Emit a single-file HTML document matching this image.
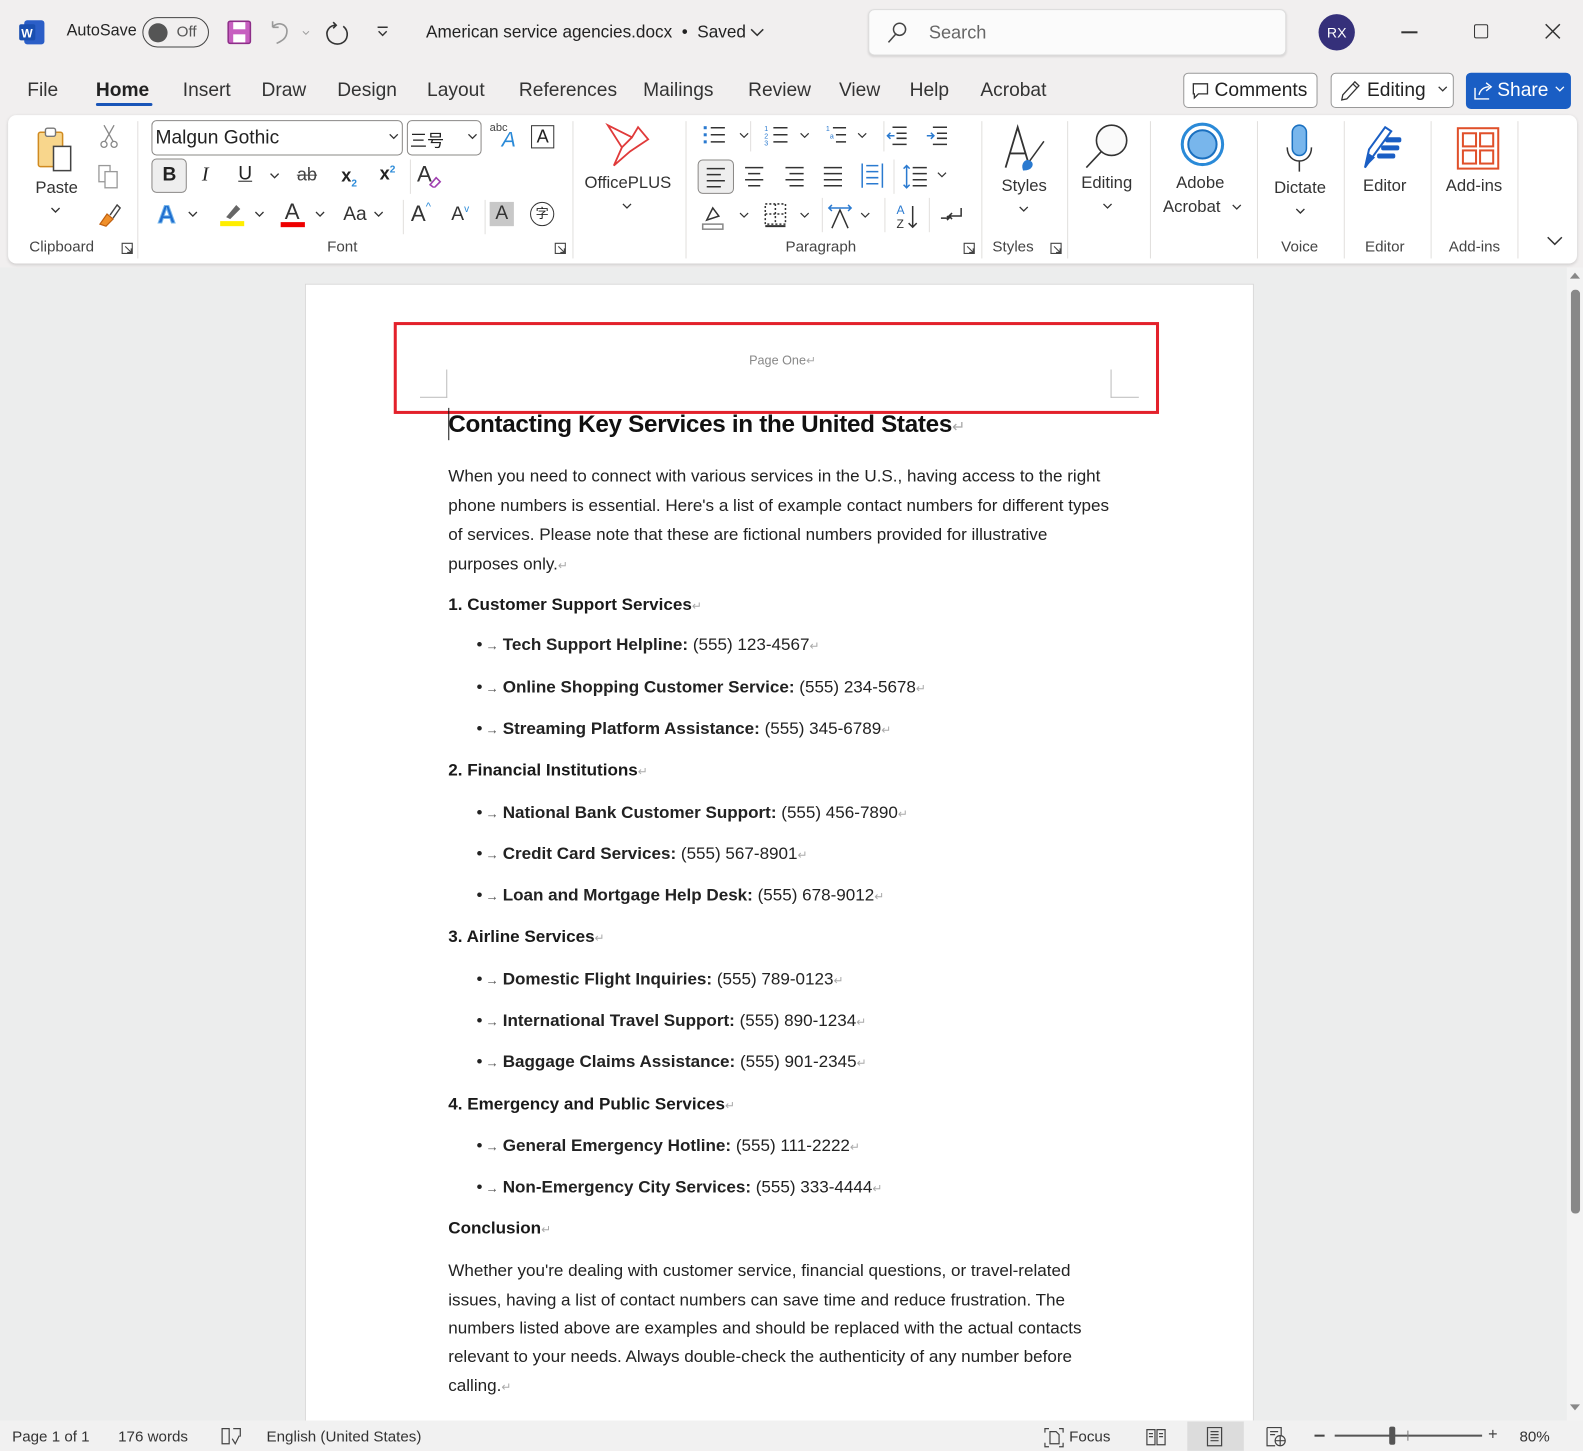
<!DOCTYPE html>
<html><head><meta charset="utf-8">
<style>
*{margin:0;padding:0;box-sizing:border-box}
html,body{width:1583px;height:1450px;overflow:hidden;background:#efeded}
#w{position:absolute;left:0;top:0;width:1568px;height:1437px;transform:scale(1.0096);transform-origin:0 0;font-family:"Liberation Sans","Noto Sans CJK SC",sans-serif;color:#222;background:#f1efef}
.a{position:absolute;white-space:nowrap}
.t{font-size:16px;color:#242424}
.tab{font-size:19px;color:#333;top:79px}
.rb{font-size:16.5px;color:#333;text-align:center}
.gl{font-size:15px;color:#444;top:236px}
.sep{position:absolute;width:1px;background:#e1dfdd}
.doc{font-size:16.9px;color:#222}
.b{font-weight:bold}
.pm{color:#aaa;font-size:12px}
.ar{color:#555;font-size:13px;margin:0 4px 0 3px}
.ic{position:absolute}
</style></head><body>
<div id="w">
<svg class="ic" style="left:18px;top:19px" width="28" height="26"><rect x="6" y="1" width="20" height="24" rx="3" fill="#2b5ec7"/><rect x="1" y="5" width="16" height="16" rx="2" fill="#1a4fb0"/><text x="3" y="18" font-size="12" font-weight="bold" fill="#fff" font-family="Liberation Sans">W</text></svg>
<div class="a t" style="left:66px;top:22px">AutoSave</div>
<div class="a" style="left:141px;top:17px;width:66px;height:30px;border:1.5px solid #444;border-radius:15px"></div>
<div class="a" style="left:147px;top:23px;width:19px;height:19px;border-radius:50%;background:#555"></div>
<div class="a t" style="left:175px;top:23px;color:#555;font-size:15px">Off</div>
<svg class="ic" style="left:224px;top:19px" width="26" height="26"><rect x="2" y="2" width="22" height="22" rx="2" fill="#c75fc0" stroke="#8d2e88" stroke-width="1.5"/><rect x="7" y="3" width="12" height="7" fill="#fff"/><rect x="7" y="15" width="12" height="8" fill="#fff"/></svg>
<svg class="ic" style="left:264px;top:17px" width="50" height="30" fill="none" stroke="#999" stroke-width="1.6"><path d="M6 10 L6 4 M6 10 L12 10 M6 10 C10 4 22 6 20 16 C19 22 14 24 10 26"/><path d="M36 14 l3 3 l3-3" stroke-width="1"/></svg>
<svg class="ic" style="left:320px;top:17px" width="30" height="30" fill="none" stroke="#333" stroke-width="1.6"><path d="M10 5 L13 8 L10 11"/><path d="M13 8 C6 8 3 14 4 18 C5 25 12 28 18 26 C25 23 26 14 20 9"/></svg>
<svg class="ic" style="left:372px;top:25px" width="14" height="14" fill="none" stroke="#333" stroke-width="1.4"><path d="M2 2 H12 M3 6 l4 4 l4-4"/></svg>
<div class="a" style="left:422px;top:22px;font-size:17px;color:#222">American service agencies.docx &nbsp;•&nbsp; Saved</div>
<svg class="ic" style="left:742px;top:26px" width="16" height="12" fill="none" stroke="#333" stroke-width="1.5"><path d="M2 3 l6 6 l6-6"/></svg>
<div class="a" style="left:860px;top:9px;width:414px;height:46px;background:#fbfbfb;border:1px solid #ddd;border-radius:6px;box-shadow:0 1px 2px rgba(0,0,0,.12)"></div>
<svg class="ic" style="left:877px;top:20px" width="24" height="24" fill="none" stroke="#444" stroke-width="1.5"><circle cx="14" cy="9" r="6"/><path d="M10 14 L3 22"/></svg>
<div class="a" style="left:920px;top:22px;font-size:18px;color:#666">Search</div>
<div class="a" style="left:1306px;top:14px;width:36px;height:36px;border-radius:50%;background:#35307a;color:#fff;font-size:14px;text-align:center;line-height:36px">RX</div>
<div class="a" style="left:1388px;top:31px;width:16px;height:1.5px;background:#333"></div>
<div class="a" style="left:1460px;top:24px;width:14px;height:14px;border:1.5px solid #333;border-radius:2px"></div>
<svg class="ic" style="left:1530px;top:23px" width="16" height="16" stroke="#333" stroke-width="1.5"><path d="M1 1 L15 15 M15 1 L1 15"/></svg>
<div class="a tab" style="left:27px">File</div>
<div class="a tab b" style="left:95px;color:#222;font-weight:bold">Home</div>
<div class="a" style="left:95px;top:102px;width:56px;height:3px;background:#1a55b8;border-radius:2px"></div>
<div class="a tab" style="left:181px">Insert</div>
<div class="a tab" style="left:259px">Draw</div>
<div class="a tab" style="left:334px">Design</div>
<div class="a tab" style="left:423px">Layout</div>
<div class="a tab" style="left:514px">References</div>
<div class="a tab" style="left:637px">Mailings</div>
<div class="a tab" style="left:741px">Review</div>
<div class="a tab" style="left:831px">View</div>
<div class="a tab" style="left:901px">Help</div>
<div class="a tab" style="left:971px">Acrobat</div>
<div class="a" style="left:1172px;top:72px;width:133px;height:35px;border:1px solid #999;border-radius:5px;background:#fff"></div>
<svg class="ic" style="left:1180px;top:81px" width="18" height="18" fill="none" stroke="#333" stroke-width="1.3"><path d="M2 2 H16 V12 H7 L3 16 V12 H2 Z"/></svg>
<div class="a" style="left:1203px;top:79px;font-size:19px;color:#222">Comments</div>
<div class="a" style="left:1318px;top:72px;width:122px;height:35px;border:1px solid #999;border-radius:5px;background:#fff"></div>
<svg class="ic" style="left:1325px;top:78px" width="24" height="24" fill="none" stroke="#333" stroke-width="1.3"><path d="M4 21 L5 16 L17 3 L21 7 L9 20 Z M15 5 L19 9"/></svg>
<div class="a" style="left:1354px;top:79px;font-size:19px;color:#222">Editing</div>
<svg class="ic" style="left:1424px;top:85px" width="10" height="8" fill="none" stroke="#333" stroke-width="1.3"><path d="M1 1 l4 4 l4-4"/></svg>
<div class="a" style="left:1452px;top:72px;width:104px;height:36px;border-radius:5px;background:#1a5ec4"></div>
<svg class="ic" style="left:1458px;top:79px" width="22" height="22" fill="none" stroke="#fff" stroke-width="1.4"><path d="M3 8 V19 H17 M7 15 C8 10 12 7 17 7 M14 3 L19 7 L14 11"/></svg>
<div class="a" style="left:1483px;top:79px;font-size:19px;color:#fff">Share</div>
<svg class="ic" style="left:1540px;top:85px" width="10" height="8" fill="none" stroke="#fff" stroke-width="1.3"><path d="M1 1 l4 4 l4-4"/></svg>
<div class="a" style="left:8px;top:114px;width:1554px;height:147px;background:#fff;border-radius:8px;box-shadow:0 1px 3px rgba(0,0,0,.15)"></div>
<svg class="ic" style="left:36px;top:125px" width="48" height="48"><rect x="2" y="6" width="24" height="34" rx="2" fill="#f8d68c" stroke="#d08a20" stroke-width="1.5"/><rect x="9" y="2" width="10" height="8" rx="2" fill="#fff" stroke="#777" stroke-width="1.4"/><rect x="17" y="20" width="17" height="24" fill="#fff" stroke="#444" stroke-width="1.5"/></svg>
<div class="a rb" style="left:35px;top:177px">Paste</div>
<svg class="ic" style="left:50px;top:205px" width="10" height="8" fill="none" stroke="#333" stroke-width="1.3"><path d="M1 1 l4 4 l4-4"/></svg>
<svg class="ic" style="left:98px;top:122px" width="20" height="26" fill="none" stroke="#888" stroke-width="1.3"><path d="M5 2 L14 18 M15 2 L6 18"/><circle cx="5" cy="21" r="3"/><circle cx="15" cy="21" r="3"/></svg>
<svg class="ic" style="left:96px;top:162px" width="24" height="26" fill="none" stroke="#999" stroke-width="1.3"><rect x="2" y="2" width="11" height="16"/><rect x="8" y="8" width="12" height="16" fill="#fff"/></svg>
<svg class="ic" style="left:96px;top:200px" width="26" height="26"><path d="M3 22 L10 12 L16 17 L9 24 Z" fill="#f0902a" stroke="#c06010" stroke-width="1.2"/><path d="M13 13 L20 3 L23 6 L16 16" fill="none" stroke="#444" stroke-width="1.4"/></svg>
<div class="a gl" style="left:29px">Clipboard</div>
<svg class="ic" style="left:120px;top:240px" width="12" height="12" fill="none" stroke="#444" stroke-width="1.1"><path d="M1 1 H11 V11 H1 Z M4 4 L10 10 M10 6 V10 H6"/></svg>
<div class="sep" style="left:136px;top:120px;height:136px"></div>
<div class="a" style="left:150px;top:119px;width:249px;height:35px;border:1px solid #8a8886;border-radius:5px"></div>
<div class="a" style="left:154px;top:126px;font-size:19px;color:#222">Malgun Gothic</div>
<svg class="ic" style="left:385px;top:132px" width="10" height="8" fill="none" stroke="#333" stroke-width="1.3"><path d="M1 1 l4 4 l4-4"/></svg>
<div class="a" style="left:403px;top:119px;width:74px;height:35px;border:1px solid #8a8886;border-radius:5px"></div>
<div class="a" style="left:406px;top:125px;font-size:17px;color:#222">三号</div>
<svg class="ic" style="left:463px;top:132px" width="10" height="8" fill="none" stroke="#333" stroke-width="1.3"><path d="M1 1 l4 4 l4-4"/></svg>
<div class="a" style="left:485px;top:121px;font-size:11px;color:#444">abc</div>
<div class="a" style="left:497px;top:127px;font-size:21px;color:#2a8ad8;font-style:italic">A</div>
<div class="a" style="left:526px;top:124px;width:23px;height:23px;border:1.5px solid #333;font-size:18px;text-align:center;line-height:21px">A</div>
<div class="a" style="left:150px;top:157px;width:35px;height:34px;border:1px solid #8a8886;border-radius:5px;background:#eee"></div>
<div class="a b" style="left:161px;top:163px;font-size:19px;font-weight:bold">B</div>
<div class="a" style="left:200px;top:162px;font-size:20px;font-style:italic;font-family:'Liberation Serif'">I</div>
<div class="a" style="left:236px;top:162px;font-size:19px;text-decoration:underline">U</div>
<svg class="ic" style="left:267px;top:171px" width="10" height="8" fill="none" stroke="#333" stroke-width="1.3"><path d="M1 1 l4 4 l4-4"/></svg>
<div class="a" style="left:294px;top:163px;font-size:18px;text-decoration:line-through;color:#444">ab</div>
<div class="a b" style="left:338px;top:164px;font-size:18px;font-weight:bold">x<sub style="font-size:10px;color:#2a8ad8">2</sub></div>
<div class="a b" style="left:376px;top:162px;font-size:18px;font-weight:bold">x<sup style="font-size:10px;color:#2a8ad8">2</sup></div>
<div class="sep" style="left:406px;top:158px;height:34px"></div>
<div class="a" style="left:413px;top:160px;font-size:22px;color:#333">A</div>
<svg class="ic" style="left:422px;top:170px" width="16" height="16"><path d="M4 13 L10 6 L14 10 L8 16 Z" fill="none" stroke="#a040b0" stroke-width="1.6"/></svg>
<div class="a b" style="left:156px;top:199px;font-size:25px;color:#1f6fd0;font-weight:bold;-webkit-text-stroke:1px #7ab7ea">A</div>
<svg class="ic" style="left:186px;top:209px" width="10" height="8" fill="none" stroke="#333" stroke-width="1.3"><path d="M1 1 l4 4 l4-4"/></svg>
<svg class="ic" style="left:218px;top:199px" width="24" height="28"><path d="M6 16 L16 4 L20 8 L10 18 Z" fill="#666"/><rect x="0" y="20" width="24" height="5" fill="#ffee00"/></svg>
<svg class="ic" style="left:252px;top:209px" width="10" height="8" fill="none" stroke="#333" stroke-width="1.3"><path d="M1 1 l4 4 l4-4"/></svg>
<div class="a" style="left:282px;top:197px;font-size:22px;color:#333">A</div>
<div class="a" style="left:278px;top:220px;width:24px;height:5px;background:#e00"></div>
<svg class="ic" style="left:312px;top:209px" width="10" height="8" fill="none" stroke="#333" stroke-width="1.3"><path d="M1 1 l4 4 l4-4"/></svg>
<div class="a" style="left:340px;top:202px;font-size:19px;color:#333">Aa</div>
<svg class="ic" style="left:370px;top:209px" width="10" height="8" fill="none" stroke="#333" stroke-width="1.3"><path d="M1 1 l4 4 l4-4"/></svg>
<div class="sep" style="left:399px;top:198px;height:34px"></div>
<div class="a" style="left:407px;top:199px;font-size:22px;color:#333">A<span style="font-size:11px;color:#2a8ad8;vertical-align:top">^</span></div>
<div class="a" style="left:447px;top:202px;font-size:19px;color:#333">A<span style="font-size:10px;color:#2a8ad8;vertical-align:top">v</span></div>
<div class="sep" style="left:480px;top:198px;height:34px"></div>
<div class="a" style="left:485px;top:200px;width:24px;height:24px;background:#c8c8c8;font-size:19px;text-align:center;line-height:24px;color:#333">A</div>
<div class="a" style="left:525px;top:200px;width:24px;height:24px;border:1.5px solid #333;border-radius:50%;font-size:13px;text-align:center;line-height:21px">字</div>
<div class="a gl" style="left:324px">Font</div>
<svg class="ic" style="left:549px;top:240px" width="12" height="12" fill="none" stroke="#444" stroke-width="1.1"><path d="M1 1 H11 V11 H1 Z M4 4 L10 10 M10 6 V10 H6"/></svg>
<div class="sep" style="left:567px;top:120px;height:136px"></div>
<svg class="ic" style="left:598px;top:120px" width="48" height="48" fill="none" stroke="#e03a3a" stroke-width="1.8"><path d="M4 4 L18 26 L10 44 L26 30 L44 18 L34 6 L28 16 Z M18 26 L28 16"/></svg>
<div class="a rb" style="left:579px;top:172px">OfficePLUS</div>
<svg class="ic" style="left:616px;top:201px" width="10" height="8" fill="none" stroke="#333" stroke-width="1.3"><path d="M1 1 l4 4 l4-4"/></svg>
<div class="sep" style="left:679px;top:120px;height:136px"></div>
<svg class="ic" style="left:694px;top:122px" width="280" height="110" fill="none" stroke="#333" stroke-width="1.5">
<g><rect x="3" y="3" width="3" height="3" fill="#2a7ad0" stroke="none"/><rect x="3" y="10" width="3" height="3" fill="#2a7ad0" stroke="none"/><rect x="3" y="17" width="3" height="3" fill="#2a7ad0" stroke="none"/><path d="M10 4.5 H24 M10 11.5 H24 M10 18.5 H24"/><path d="M39 10 l4 4 l4-4" stroke-width="1.2"/></g>
<g transform="translate(62,0)"><path d="M10 4.5 H24 M10 11.5 H24 M10 18.5 H24"/><text x="1" y="8" font-size="7" fill="#2a7ad0" stroke="none">1</text><text x="1" y="15" font-size="7" fill="#2a7ad0" stroke="none">2</text><text x="1" y="22" font-size="7" fill="#2a7ad0" stroke="none">3</text><path d="M37 10 l4 4 l4-4" stroke-width="1.2"/></g>
<g transform="translate(124,0)"><path d="M7 4.5 H20 M10 11.5 H20 M10 18.5 H20"/><text x="0" y="8" font-size="7" fill="#2a7ad0" stroke="none">1</text><text x="4" y="15" font-size="7" fill="#2a7ad0" stroke="none">a</text><path d="M32 10 l4 4 l4-4" stroke-width="1.2"/></g>
<g transform="translate(182,0)"><path d="M8 4 H22 M12 10 H22 M12 15 H22 M8 21 H22"/><path d="M10 12.5 H3 M6 9.5 l-3 3 l3 3" stroke="#2a7ad0"/></g>
<g transform="translate(222,0)"><path d="M8 4 H22 M12 10 H22 M12 15 H22 M8 21 H22"/><path d="M2 12.5 H9 M6 9.5 l3 3 l-3 3" stroke="#2a7ad0"/></g>
<g transform="translate(42,40)"><path d="M2 4 H20 M5 10 H17 M2 16 H20 M5 22 H17"/></g>
<g transform="translate(82,40)"><path d="M2 4 H20 M6 10 H20 M2 16 H20 M6 22 H20"/></g>
<g transform="translate(120,40)"><path d="M2 4 H20 M2 10 H20 M2 16 H20 M2 22 H20"/></g>
<g transform="translate(158,38)"><path d="M2 2 V26 M22 2 V26 M6 10 H18 M6 16 H18 M6 22 H18 M6 4 H18" stroke="#2a7ad0"/></g>
<g transform="translate(200,40)"><path d="M10 4 H24 M10 10 H24 M10 16 H24 M10 22 H24"/><path d="M4 2 V24 M1 5 l3-3 l3 3 M1 21 l3 3 l3-3" stroke="#2a7ad0"/><path d="M35 9 l4 4 l4-4" stroke-width="1.2"/></g>
<g transform="translate(0,78)"><path d="M6 18 L12 6 L18 14 Z"/><rect x="2" y="22" width="20" height="5" stroke="#888"/><path d="M39 11 l4 4 l4-4" stroke-width="1.2"/></g>
<g transform="translate(62,78)"><rect x="2" y="2" width="20" height="20" stroke-dasharray="2 2"/><path d="M12 2 V22 M2 12 H22" stroke-dasharray="2 2"/><path d="M2 24 H22" stroke-width="2"/><path d="M37 11 l4 4 l4-4" stroke-width="1.2"/></g>
<g transform="translate(124,78)"><path d="M6 26 L14 8 L22 26"/><path d="M3 6 H25 M6 3 L3 6 L6 9 M22 3 L25 6 L22 9" stroke="#2a7ad0"/><path d="M35 11 l4 4 l4-4" stroke-width="1.2"/></g>
<g transform="translate(194,78)"><text x="0" y="12" font-size="12" fill="#2a7ad0" stroke="none">A</text><text x="0" y="26" font-size="12" fill="#333" stroke="none">Z</text><path d="M16 4 V25 M12 21 l4 4 l4-4"/></g>
<g transform="translate(236,78)"><path d="M22 6 V14 H10 M13 11 l-3 3 l3 3 M2 16 H10 M8 14 l2 2 l-2 2"/></g>
</svg>
<div class="a" style="left:691px;top:158px;width:36px;height:34px;border:1px solid #8a8886;border-radius:5px;background:#eee"></div>
<svg class="ic" style="left:698px;top:163px" width="24" height="26" fill="none" stroke="#333" stroke-width="1.5"><path d="M2 4 H20 M2 10 H16 M2 16 H20 M2 22 H16"/></svg>
<div class="sep" style="left:743px;top:120px;height:30px"></div>
<div class="sep" style="left:875px;top:120px;height:30px"></div>
<div class="sep" style="left:885px;top:158px;height:34px"></div>
<div class="sep" style="left:814px;top:196px;height:34px"></div>
<div class="sep" style="left:876px;top:196px;height:34px"></div>
<div class="sep" style="left:920px;top:196px;height:34px"></div>
<div class="a gl" style="left:778px">Paragraph</div>
<svg class="ic" style="left:954px;top:240px" width="12" height="12" fill="none" stroke="#444" stroke-width="1.1"><path d="M1 1 H11 V11 H1 Z M4 4 L10 10 M10 6 V10 H6"/></svg>
<div class="sep" style="left:972px;top:120px;height:136px"></div>
<svg class="ic" style="left:992px;top:122px" width="50" height="52" fill="none" stroke="#333" stroke-width="1.8"><path d="M4 44 L16 4 L28 44 M9 30 H23"/><path d="M26 40 L42 18" stroke-width="1.5"/><path d="M22 46 C20 40 24 36 28 38 C32 40 30 46 22 46 Z" fill="#2a7ad0" stroke="#2a7ad0"/></svg>
<div class="a rb" style="left:992px;top:175px">Styles</div>
<svg class="ic" style="left:1009px;top:204px" width="10" height="8" fill="none" stroke="#333" stroke-width="1.3"><path d="M1 1 l4 4 l4-4"/></svg>
<div class="a gl" style="left:983px">Styles</div>
<svg class="ic" style="left:1040px;top:240px" width="12" height="12" fill="none" stroke="#444" stroke-width="1.1"><path d="M1 1 H11 V11 H1 Z M4 4 L10 10 M10 6 V10 H6"/></svg>
<div class="sep" style="left:1057px;top:120px;height:136px"></div>
<svg class="ic" style="left:1072px;top:120px" width="50" height="50" fill="none" stroke="#333" stroke-width="1.6"><circle cx="29" cy="19" r="15" fill="#fafafa"/><path d="M19 30 L4 46"/></svg>
<div class="a rb" style="left:1071px;top:172px">Editing</div>
<svg class="ic" style="left:1092px;top:201px" width="10" height="8" fill="none" stroke="#333" stroke-width="1.3"><path d="M1 1 l4 4 l4-4"/></svg>
<div class="sep" style="left:1139px;top:120px;height:136px"></div>
<svg class="ic" style="left:1168px;top:120px" width="46" height="46"><circle cx="23" cy="23" r="20" fill="none" stroke="#2a8ad8" stroke-width="3"/><circle cx="23" cy="23" r="14" fill="#78b6ec" stroke="#1a70c0" stroke-width="2"/></svg>
<div class="a rb" style="left:1165px;top:172px">Adobe</div>
<div class="a rb" style="left:1152px;top:196px">Acrobat</div>
<svg class="ic" style="left:1220px;top:202px" width="10" height="8" fill="none" stroke="#333" stroke-width="1.3"><path d="M1 1 l4 4 l4-4"/></svg>
<div class="sep" style="left:1245px;top:120px;height:136px"></div>
<svg class="ic" style="left:1272px;top:122px" width="30" height="50" fill="none" stroke="#333" stroke-width="1.5"><rect x="8" y="2" width="14" height="30" rx="7" fill="#78b6ec" stroke="#1a70c0"/><path d="M3 24 C3 42 27 42 27 24 M15 38 V48"/></svg>
<div class="a rb" style="left:1262px;top:177px">Dictate</div>
<svg class="ic" style="left:1283px;top:206px" width="10" height="8" fill="none" stroke="#333" stroke-width="1.3"><path d="M1 1 l4 4 l4-4"/></svg>
<div class="a gl" style="left:1269px">Voice</div>
<div class="sep" style="left:1331px;top:120px;height:136px"></div>
<svg class="ic" style="left:1348px;top:122px" width="50" height="46"><path d="M4 44 L8 26 L24 4 L30 8 L14 30 Z" fill="#fff" stroke="#1a5ec4" stroke-width="2"/><path d="M4 44 L8 30 L14 34 Z" fill="#1a5ec4"/><rect x="24" y="14" width="16" height="5" rx="2" fill="#1a5ec4"/><rect x="20" y="22" width="18" height="5" rx="2" fill="#1a5ec4"/><rect x="16" y="30" width="18" height="5" rx="2" fill="#1a5ec4"/></svg>
<div class="a rb" style="left:1350px;top:175px">Editor</div>
<div class="a gl" style="left:1352px">Editor</div>
<div class="sep" style="left:1417px;top:120px;height:136px"></div>
<svg class="ic" style="left:1442px;top:125px" width="44" height="44" fill="none" stroke="#e0502a" stroke-width="2"><rect x="2" y="2" width="40" height="40"/><rect x="7" y="7" width="13" height="13"/><rect x="24" y="7" width="13" height="13"/><rect x="7" y="24" width="13" height="13"/><rect x="24" y="24" width="13" height="13"/></svg>
<div class="a rb" style="left:1432px;top:175px">Add-ins</div>
<div class="a gl" style="left:1435px">Add-ins</div>
<div class="sep" style="left:1503px;top:120px;height:136px"></div>
<svg class="ic" style="left:1532px;top:234px" width="16" height="10" fill="none" stroke="#333" stroke-width="1.5"><path d="M1 1 l7 7 l7-7"/></svg>
<div class="a" style="left:0;top:265px;width:1552px;height:1142px;background:#eceded"></div>
<div class="a" style="left:302px;top:281px;width:940px;height:1130px;background:#fff;border:1px solid #d8d8d8"></div>
<div class="a" style="left:1552px;top:265px;width:16px;height:1142px;background:#f3f3f3"></div>
<div class="a" style="left:1556px;top:287px;width:9px;height:915px;background:#888;border-radius:4px"></div>
<svg class="ic" style="left:1554px;top:268px" width="12" height="9"><path d="M1 8 L6 2 L11 8 Z" fill="#888"/></svg>
<svg class="ic" style="left:1554px;top:1390px" width="12" height="9"><path d="M1 1 L6 7 L11 1 Z" fill="#888"/></svg>
<div class="a" style="left:390px;top:319px;width:758px;height:91px;border:3px solid #e3212b"></div>
<div class="a" style="left:742px;top:350px;font-size:12.5px;color:#888">Page One<span class="pm">↵</span></div>
<div class="a" style="left:442px;top:366px;width:1px;height:28px;background:#bbb"></div>
<div class="a" style="left:416px;top:393px;width:27px;height:1px;background:#bbb"></div>
<div class="a" style="left:1100px;top:366px;width:1px;height:28px;background:#bbb"></div>
<div class="a" style="left:1100px;top:393px;width:28px;height:1px;background:#bbb"></div>
<div class="a" style="left:444px;top:404px;width:1px;height:32px;background:#111"></div>
<div class="a b" style="left:444px;top:407px;font-size:24px;color:#111;letter-spacing:-0.3px">Contacting Key Services in the United States<span class="pm" style="font-weight:normal;font-size:16px">↵</span></div>
<div class="a doc" style="left:444px;top:462px">When you need to connect with various services in the U.S., having access to the right</div>
<div class="a doc" style="left:444px;top:491px">phone numbers is essential. Here's a list of example contact numbers for different types</div>
<div class="a doc" style="left:444px;top:520px">of services. Please note that these are fictional numbers provided for illustrative</div>
<div class="a doc" style="left:444px;top:549px">purposes only.<span class="pm">↵</span></div>
<div class="a doc" style="left:444px;top:589px;font-weight:bold;color:#1a1a1a">1. Customer Support Services<span class="pm" style="font-weight:normal">↵</span></div>
<div class="a doc" style="left:472px;top:629px">•<span class="ar">→</span><b>Tech Support Helpline:</b> (555) 123-4567<span class="pm">↵</span></div>
<div class="a doc" style="left:472px;top:671px">•<span class="ar">→</span><b>Online Shopping Customer Service:</b> (555) 234-5678<span class="pm">↵</span></div>
<div class="a doc" style="left:472px;top:712px">•<span class="ar">→</span><b>Streaming Platform Assistance:</b> (555) 345-6789<span class="pm">↵</span></div>
<div class="a doc" style="left:444px;top:753px;font-weight:bold;color:#1a1a1a">2. Financial Institutions<span class="pm" style="font-weight:normal">↵</span></div>
<div class="a doc" style="left:472px;top:795px">•<span class="ar">→</span><b>National Bank Customer Support:</b> (555) 456-7890<span class="pm">↵</span></div>
<div class="a doc" style="left:472px;top:836px">•<span class="ar">→</span><b>Credit Card Services:</b> (555) 567-8901<span class="pm">↵</span></div>
<div class="a doc" style="left:472px;top:877px">•<span class="ar">→</span><b>Loan and Mortgage Help Desk:</b> (555) 678-9012<span class="pm">↵</span></div>
<div class="a doc" style="left:444px;top:918px;font-weight:bold;color:#1a1a1a">3. Airline Services<span class="pm" style="font-weight:normal">↵</span></div>
<div class="a doc" style="left:472px;top:960px">•<span class="ar">→</span><b>Domestic Flight Inquiries:</b> (555) 789-0123<span class="pm">↵</span></div>
<div class="a doc" style="left:472px;top:1001px">•<span class="ar">→</span><b>International Travel Support:</b> (555) 890-1234<span class="pm">↵</span></div>
<div class="a doc" style="left:472px;top:1042px">•<span class="ar">→</span><b>Baggage Claims Assistance:</b> (555) 901-2345<span class="pm">↵</span></div>
<div class="a doc" style="left:444px;top:1084px;font-weight:bold;color:#1a1a1a">4. Emergency and Public Services<span class="pm" style="font-weight:normal">↵</span></div>
<div class="a doc" style="left:472px;top:1125px">•<span class="ar">→</span><b>General Emergency Hotline:</b> (555) 111-2222<span class="pm">↵</span></div>
<div class="a doc" style="left:472px;top:1166px">•<span class="ar">→</span><b>Non-Emergency City Services:</b> (555) 333-4444<span class="pm">↵</span></div>
<div class="a doc" style="left:444px;top:1207px;font-weight:bold;color:#1a1a1a">Conclusion<span class="pm" style="font-weight:normal">↵</span></div>
<div class="a doc" style="left:444px;top:1249px">Whether you're dealing with customer service, financial questions, or travel-related</div>
<div class="a doc" style="left:444px;top:1278px">issues, having a list of contact numbers can save time and reduce frustration. The</div>
<div class="a doc" style="left:444px;top:1306px">numbers listed above are examples and should be replaced with the actual contacts</div>
<div class="a doc" style="left:444px;top:1334px">relevant to your needs. Always double-check the authenticity of any number before</div>
<div class="a doc" style="left:444px;top:1363px">calling.<span class="pm">↵</span></div>
<div class="a" style="left:0;top:1407px;width:1568px;height:30px;background:#f1f1f1"></div>
<div class="a" style="left:12px;top:1415px;font-size:15px;color:#333">Page 1 of 1</div>
<div class="a" style="left:117px;top:1415px;font-size:15px;color:#333">176 words</div>
<svg class="ic" style="left:218px;top:1413px" width="22" height="20" fill="none" stroke="#444" stroke-width="1.2"><path d="M2 2 H9 V17 H2 Z M13 2 H20 V10 M12 12 l3 5 l4-8"/></svg>
<div class="a" style="left:264px;top:1415px;font-size:15px;color:#333">English (United States)</div>
<svg class="ic" style="left:1033px;top:1413px" width="22" height="22" fill="none" stroke="#444" stroke-width="1.2"><path d="M2 6 V2 H6 M16 2 H20 V6 M2 16 V20 H6 M16 20 H20 V16 M7 5 H13 L16 8 V17 H7 Z"/></svg>
<div class="a" style="left:1059px;top:1415px;font-size:15px;color:#333">Focus</div>
<svg class="ic" style="left:1134px;top:1413px" width="22" height="20" fill="none" stroke="#444" stroke-width="1.2"><path d="M2 3 H10 V18 H2 Z M12 3 H20 V18 H12 Z M4 7 H8 M4 10 H8 M14 7 H18 M14 10 H18"/></svg>
<div class="a" style="left:1176px;top:1408px;width:56px;height:29px;background:#dcdcdc"></div>
<svg class="ic" style="left:1193px;top:1412px" width="22" height="22" fill="none" stroke="#444" stroke-width="1.2"><path d="M3 2 H17 V20 H3 Z M6 6 H14 M6 9 H14 M6 12 H14 M6 15 H14"/></svg>
<svg class="ic" style="left:1253px;top:1412px" width="22" height="22" fill="none" stroke="#444" stroke-width="1.2"><path d="M2 2 H16 V10 M2 2 V20 H10 M5 6 H13 M5 9 H10"/><circle cx="15" cy="15" r="5"/><path d="M10 15 H20 M15 10 V20"/></svg>
<div class="a" style="left:1302px;top:1421px;width:10px;height:1.5px;background:#444"></div>
<div class="a" style="left:1322px;top:1421px;width:146px;height:2px;background:#555"></div>
<div class="a" style="left:1376px;top:1413px;width:6px;height:18px;background:#555;border-radius:2px"></div>
<div class="a" style="left:1394px;top:1417px;width:1px;height:10px;background:#777"></div>
<div class="a" style="left:1474px;top:1413px;font-size:16px;color:#444">+</div>
<div class="a" style="left:1505px;top:1415px;font-size:15px;color:#333">80%</div>
</div>
</body></html>
